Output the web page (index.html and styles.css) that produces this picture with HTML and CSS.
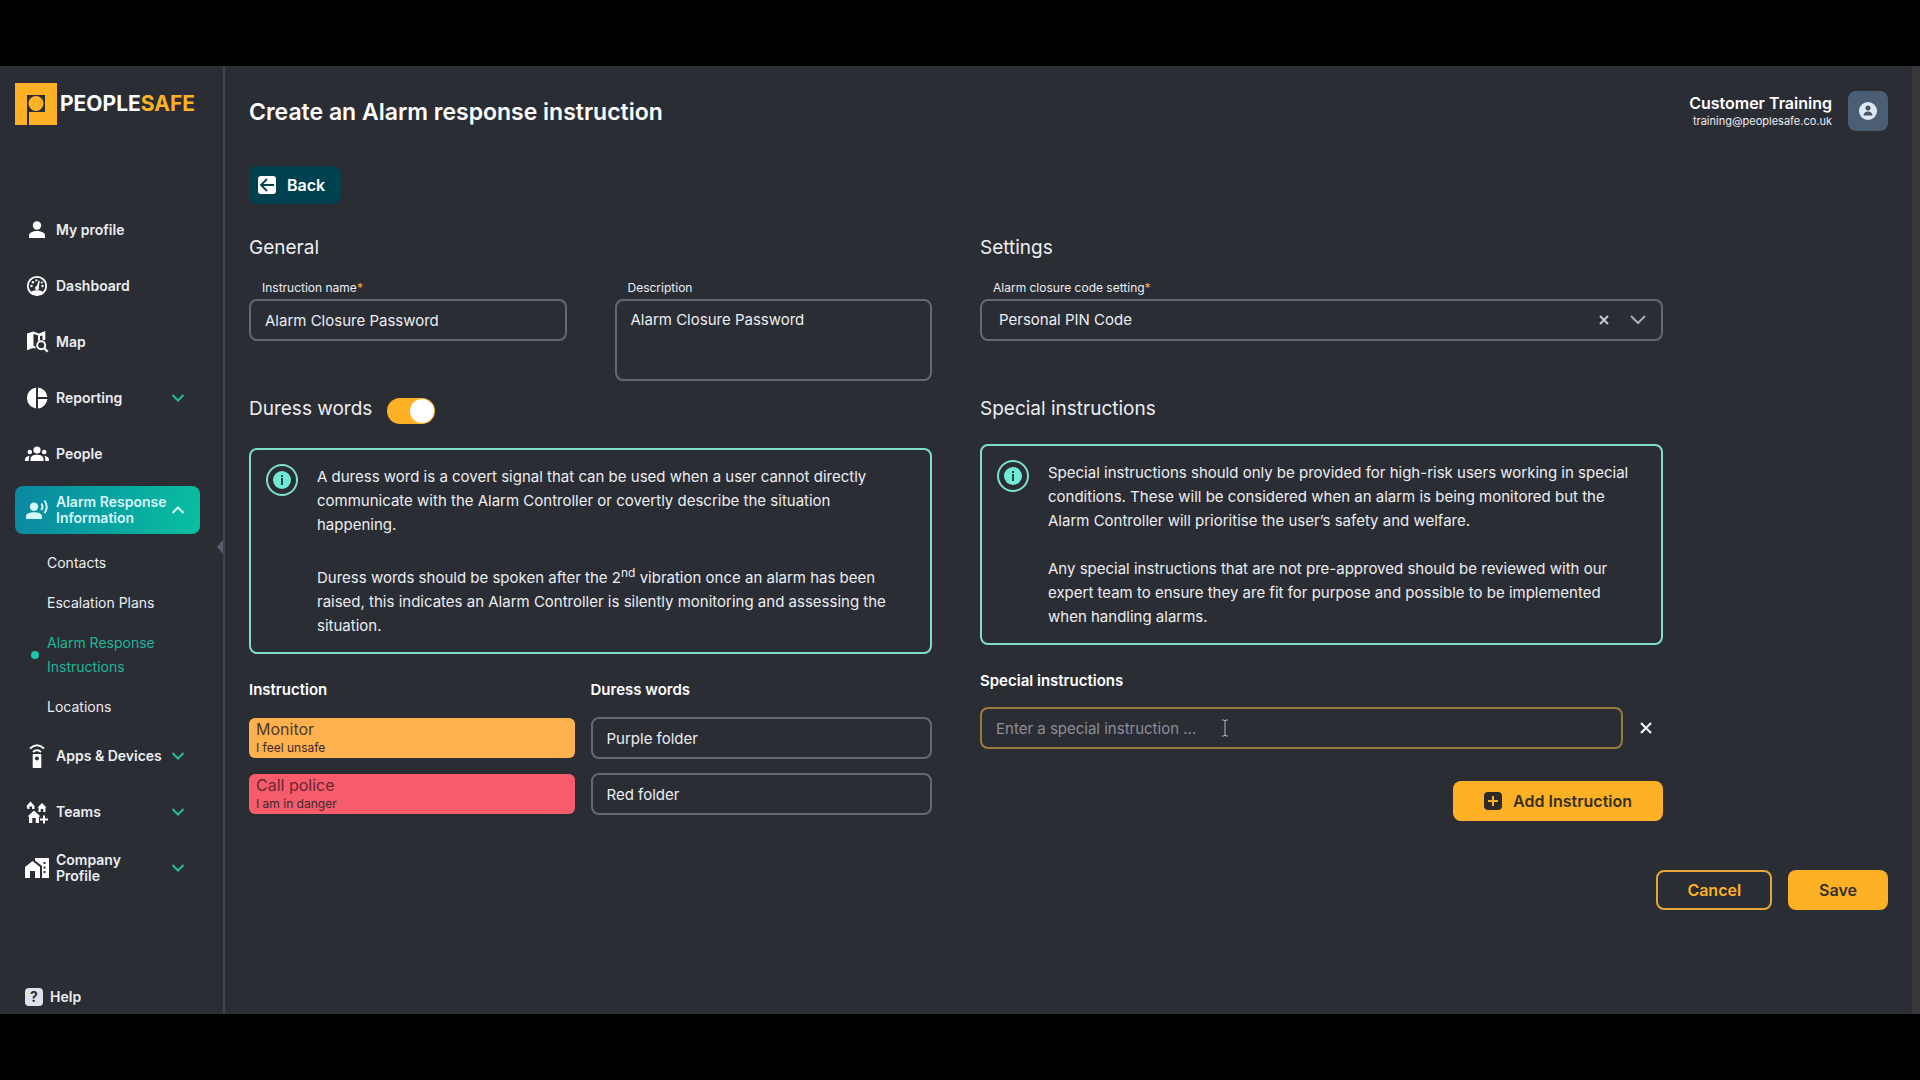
FILE: index.html
```html
<!DOCTYPE html>
<html lang="en">
<head>
<meta charset="utf-8">
<title>Create an Alarm response instruction</title>
<link rel="stylesheet" href="styles.css">
</head>
<body>
<div class="app">
  <aside class="sidebar">
    <a class="logo" href="#">
      <svg width="42" height="42" viewBox="0 0 42 42" aria-hidden="true">
        <path fill="#ffb125" d="M0 0h42v42H0z"/>
        <path fill="#2b2d35" d="M12 12h18v17H14v13h-2z"/>
        <circle cx="21" cy="20.500" r="7.500" fill="#ffb125"/>
      </svg>
      <span class="logo-text">PEOPLE<span class="logo-accent">SAFE</span></span>
    </a>
    <nav class="nav">
      <a class="nav-item" href="#">
        <svg class="nav-icon" viewBox="0 0 24 24"><circle cx="12" cy="7.500" r="4.200"/><path d="M4 20v-2.500c0-3 4-4.500 8-4.500s8 1.500 8 4.500V20z"/></svg>
        <span class="nav-label">My profile</span>
      </a>
      <a class="nav-item" href="#">
        <svg class="nav-icon" viewBox="0 0 24 24"><circle cx="12" cy="12" r="9.200" fill="none" stroke="currentColor" stroke-width="1.800"/><path d="M5.500 18.500c1.500-2 4-2.300 6.500-2.300s5 .3 6.500 2.300L12 21.500z"/><circle cx="12" cy="14" r="2"/><path d="M11.300 14l2.200-7.500 1.300.4-1.300 7.500z"/><circle cx="6.500" cy="12" r="1.200"/><circle cx="8" cy="8.200" r="1.200"/><circle cx="11.300" cy="6.300" r="1.100"/><circle cx="17.500" cy="12" r="1.200"/><circle cx="16.800" cy="8.500" r="1.100"/></svg>
        <span class="nav-label">Dashboard</span>
      </a>
      <a class="nav-item" href="#">
        <svg class="nav-icon" viewBox="0 0 24 24"><path d="M8.500 1.500v16.200L2 20.300V3.500z"/><path d="M8 2.500l6 2.200 5.300-2.200v7M14 4.700v6M8 16.800l2.500 1" fill="none" stroke="currentColor" stroke-width="2"/><path d="M14 4l6-2.300v8.500l-2.500-.5V5.500L14 6.500z"/><circle cx="16.200" cy="15.200" r="4" fill="none" stroke="currentColor" stroke-width="1.900"/><path d="m19 18 3.700 3.700" fill="none" stroke="currentColor" stroke-width="2.200"/></svg>
        <span class="nav-label">Map</span>
      </a>
      <a class="nav-item" href="#">
        <svg class="nav-icon" viewBox="0 0 24 24"><path d="M11 1.600v20.800A10.500 10.500 0 0 1 11 1.600zM13 1.600A10.500 10.500 0 0 1 22.400 11H13zM13 13h9.400A10.500 10.500 0 0 1 13 22.400z"/></svg>
        <span class="nav-label">Reporting</span>
        <svg class="chevron" viewBox="0 0 14 8"><path d="m1.500 1 5.500 5.500L12.500 1"/></svg>
      </a>
      <a class="nav-item" href="#">
        <svg class="nav-icon" viewBox="0 0 24 24"><circle cx="12" cy="8" r="3.600"/><path d="M5.500 19v-2c0-2.700 3-4.200 6.500-4.200s6.500 1.500 6.500 4.200v2z"/><circle cx="4.800" cy="10" r="2.300"/><circle cx="19.200" cy="10" r="2.300"/><path d="M0 19v-1.500C0 15.500 2 14 4.800 13.800A5 5 0 0 0 3.800 17v2zM24 19v-1.500c0-2-2-3.500-4.800-3.700a5 5 0 0 1 1 3.200v2z"/></svg>
        <span class="nav-label">People</span>
      </a>
      <a class="nav-item nav-item-active" href="#">
        <svg class="nav-icon" viewBox="0 0 24 24"><circle cx="9" cy="8.800" r="4.200"/><path d="M1 21v-2.700C1 15.500 5 14.300 9 14.300s8 1.200 8 4V21z"/><path d="M16.300 5.500a5.500 5.500 0 0 1 0 6.500M19.500 2.500a10 10 0 0 1 0 12.500" fill="none" stroke="currentColor" stroke-width="2"/></svg>
        <span class="nav-label">Alarm Response<br>Information</span>
        <svg class="chevron" viewBox="0 0 14 8"><path d="M1.500 7 7 1.500 12.500 7"/></svg>
      </a>
      <div class="subnav">
        <a class="subnav-item" href="#">Contacts</a>
        <a class="subnav-item" href="#">Escalation Plans</a>
        <a class="subnav-item subnav-item-active" href="#">Alarm Response Instructions</a>
        <a class="subnav-item" href="#">Locations</a>
      </div>
      <a class="nav-item" href="#">
        <svg class="nav-icon" viewBox="0 0 24 24"><path fill-rule="evenodd" d="M8.500 10h7a.8.8 0 0 1 .8.800V23.200a.8.8 0 0 1-.8.800h-7a.8.8 0 0 1-.8-.800V10.800a.8.8 0 0 1 .8-.8zM12 12.500a2 2 0 1 0 0 4 2 2 0 0 0 0-4z"/><path d="M5 4.500q7-6.500 14 0M8 8q4-3.500 8 0" fill="none" stroke="currentColor" stroke-width="2"/></svg>
        <span class="nav-label">Apps &amp; Devices</span>
        <svg class="chevron" viewBox="0 0 14 8"><path d="m1.500 1 5.500 5.500L12.500 1"/></svg>
      </a>
      <a class="nav-item" href="#">
        <svg class="nav-icon" viewBox="0 0 24 24"><path d="m1.500 6 4-4.500 4 4.500v3H7V6.500H4.500V9h-2zM12.500 7.500 17 3l4.500 4.500h-1V12h-2.300V9h-2.500v3h-2.200V7.500zM2.500 16.500 9 10.500l6.500 6H14V23h-3.300v-5H7.300v5H4v-6.500z"/><path d="M19 15.500v8M15 19.500h8" fill="none" stroke="currentColor" stroke-width="2"/></svg>
        <span class="nav-label">Teams</span>
        <svg class="chevron" viewBox="0 0 14 8"><path d="m1.500 1 5.500 5.500L12.500 1"/></svg>
      </a>
      <a class="nav-item" href="#">
        <svg class="nav-icon" viewBox="0 0 24 24"><path d="M0 22V11l7.500-6L15 11v11h-5v-7H5v7z"/><path fill-rule="evenodd" d="M10 2h14v20h-7V10l-7-5.500zM18.500 6v2h2V6zM18.500 10.500v2h2v-2zM18.500 15v2h2v-2z"/></svg>
        <span class="nav-label">Company<br>Profile</span>
        <svg class="chevron" viewBox="0 0 14 8"><path d="m1.500 1 5.500 5.500L12.500 1"/></svg>
      </a>
    </nav>
    <a class="help" href="#"><span class="help-mark">?</span>Help</a>
    <button class="collapse" type="button" aria-label="Collapse menu">
      <svg width="6" height="14" viewBox="0 0 6 14"><path fill="#565e6e" d="M6 0v14L0 7z"/></svg>
    </button>
  </aside>

  <main class="main">
    <header class="header">
      <h1 class="title">Create an Alarm response instruction</h1>
      <div class="user">
        <div class="user-text">
          <span class="user-name">Customer Training</span>
          <span class="user-mail">training@peoplesafe.co.uk</span>
        </div>
        <button class="avatar" type="button" aria-label="Account">
          <svg width="20" height="20" viewBox="0 0 20 20"><circle cx="10" cy="10" r="9" fill="#dfe9f3"/><circle cx="10" cy="7" r="2.500" fill="#43566a"/><path fill="#43566a" d="M5.500 14.500c0-5.500 9-5.500 9 0z"/></svg>
        </button>
      </div>
    </header>

    <button class="back" type="button">
      <svg width="20" height="20" viewBox="0 0 20 20"><rect x="1" y="1" width="18" height="18" rx="3" fill="#fff"/><path d="M17 10H4.500M10 4l-6 6 6 6" fill="none" stroke="#00414f" stroke-width="1.800"/></svg>
      Back
    </button>

    <form class="form" id="instruction-form">
      <section>
        <h2 class="heading">General</h2>
        <div class="pair">
          <div class="field">
            <label class="label" for="name">Instruction name<span class="required">*</span></label>
            <input class="control" id="name" type="text" value="Alarm Closure Password">
          </div>
          <div class="field">
            <label class="label" for="description">Description</label>
            <textarea class="control control-area" id="description">Alarm Closure Password</textarea>
          </div>
        </div>
      </section>

      <section>
        <h2 class="heading">Settings</h2>
        <div class="field">
          <label class="label" for="code">Alarm closure code setting<span class="required">*</span></label>
          <div class="select-wrap">
            <select class="control control-select" id="code"><option>Personal PIN Code</option></select>
            <button class="select-clear" type="button" aria-label="Clear">
              <svg width="12" height="12" viewBox="0 0 12 12"><path d="m2 2 8 8M10 2l-8 8" fill="none" stroke="#c6c9cf" stroke-width="2"/></svg>
            </button>
            <svg class="select-arrow" width="18" height="12" viewBox="0 0 18 12"><path d="m2 2 7 7 7-7" fill="none" stroke="#a9adb5" stroke-width="2"/></svg>
          </div>
        </div>
      </section>

      <section>
        <div class="heading-row">
          <h2 class="heading">Duress words</h2>
          <input class="toggle" type="checkbox" role="switch" aria-label="Duress words" checked>
        </div>
        <div class="info">
          <svg class="info-icon" viewBox="0 0 32 32"><circle cx="16" cy="16" r="15" fill="none" stroke="#7fe0cf" stroke-width="2"/><circle cx="16" cy="16" r="9" fill="#6febd7"/><path fill="#23484b" d="M15 11h2v2h-2zM15 14h2v7h-2z"/></svg>
          <div class="info-text">
            <p>A duress word is a covert signal that can be used when a user cannot directly communicate with the Alarm Controller or covertly describe the situation happening.</p>
            <p>Duress words should be spoken after the 2<sup>nd</sup> vibration once an alarm has been raised, this indicates an Alarm Controller is silently monitoring and assessing the situation.</p>
          </div>
        </div>
        <table class="words">
          <thead>
            <tr><th>Instruction</th><th>Duress words</th></tr>
          </thead>
          <tbody>
            <tr>
              <td><div class="tag tag-monitor"><span class="tag-name">Monitor</span><span class="tag-note">I feel unsafe</span></div></td>
              <td><input class="control" type="text" aria-label="Monitor duress words" value="Purple folder"></td>
            </tr>
            <tr>
              <td><div class="tag tag-police"><span class="tag-name">Call police</span><span class="tag-note">I am in danger</span></div></td>
              <td><input class="control" type="text" aria-label="Call police duress words" value="Red folder"></td>
            </tr>
          </tbody>
        </table>
      </section>

      <section>
        <h2 class="heading">Special instructions</h2>
        <div class="info">
          <svg class="info-icon" viewBox="0 0 32 32"><circle cx="16" cy="16" r="15" fill="none" stroke="#7fe0cf" stroke-width="2"/><circle cx="16" cy="16" r="9" fill="#6febd7"/><path fill="#23484b" d="M15 11h2v2h-2zM15 14h2v7h-2z"/></svg>
          <div class="info-text">
            <p>Special instructions should only be provided for high-risk users working in special conditions. These will be considered when an alarm is being monitored but the Alarm Controller will prioritise the user’s safety and welfare.</p>
            <p>Any special instructions that are not pre-approved should be reviewed with our expert team to ensure they are fit for purpose and possible to be implemented when handling alarms.</p>
          </div>
        </div>
        <label class="strong-label" for="special">Special instructions</label>
        <div class="special-row">
          <div class="special-field">
            <input class="control control-focus" id="special" type="text" placeholder="Enter a special instruction ...">
            <svg class="caret" width="8" height="18" viewBox="0 0 8 18"><path d="M1 1h2l1 1 1-1h2M1 17h2l1-1 1 1h2M4 2v14" fill="none" stroke="#b4b7bc" stroke-width="1"/></svg>
          </div>
          <button class="remove" type="button" aria-label="Remove instruction">
            <svg width="14" height="14" viewBox="0 0 14 14"><path d="m2 2 10 10M12 2 2 12" fill="none" stroke="#fff" stroke-width="2"/></svg>
          </button>
        </div>
        <button class="button button-add" type="button">
          <svg width="18" height="18" viewBox="0 0 18 18"><rect width="18" height="18" rx="4" fill="#2d2a28"/><path d="M9 4v10M4 9h10" stroke="#ffb125" stroke-width="2"/></svg>
          Add Instruction
        </button>
      </section>
    </form>

    <div class="actions">
      <button class="button button-outline" type="button">Cancel</button>
      <button class="button" type="submit" form="instruction-form">Save</button>
    </div>
  </main>
</div>
</body>
</html>
```
FILE: styles.css
```css
* {
  box-sizing: border-box;
}

body {
  margin: 0;
  min-height: 100vh;
  padding: 66px 0;
  display: flex;
  background: #000;
  color: #eceef1;
  font: 15px/24px Inter, "Liberation Sans", sans-serif;
}

a {
  color: inherit;
  text-decoration: none;
}

button,
input,
select,
textarea {
  font: inherit;
  color: inherit;
}

button {
  border: 0;
  padding: 0;
  background: none;
  cursor: pointer;
}

h1,
h2,
p {
  margin: 0;
}

.app {
  flex: 1;
  display: flex;
  background: #2b2d35;
  border-right: 8px solid #38383b;
}

/* Sidebar */

.sidebar {
  position: relative;
  flex: none;
  width: 225px;
  padding: 17px 23px 5px 15px;
  display: flex;
  flex-direction: column;
  border-right: 2px solid #41434b;
}

.logo {
  display: flex;
  align-items: center;
  gap: 3px;
}

.logo-text {
  color: #fff;
  font-size: 21px;
  font-weight: 700;
}

.logo-accent {
  color: #ffb125;
}

.nav {
  margin-top: 81px;
  display: flex;
  flex-direction: column;
  gap: 8px;
}

.nav-item {
  height: 48px;
  padding: 0 15px 0 10px;
  display: flex;
  align-items: center;
  gap: 7px;
  border-radius: 8px;
  font-size: 14px;
  font-weight: 600;
  line-height: 16px;
  white-space: nowrap;
}

.nav-item-active {
  background: linear-gradient(100deg, #0a87a0, #08bfa0);
}

.nav-icon {
  flex: none;
  width: 24px;
  height: 24px;
  fill: currentColor;
  color: #fff;
}

.nav-label {
  flex: 1;
  min-width: 0;
}

.chevron {
  flex: none;
  width: 14px;
  height: 8px;
  fill: none;
  stroke: #25b899;
  stroke-width: 2;
}

.nav-item-active .chevron {
  stroke: #d4fff5;
}

.nav-item-active .nav-icon,
.nav-item-active .nav-label {
  color: #d8f7fb;
}

.subnav {
  margin-top: -8px;
  padding: 17px 32px 5px;
  display: flex;
  flex-direction: column;
  gap: 16px;
  font-size: 14px;
}

.subnav-item {
  position: relative;
}

.subnav-item-active {
  color: #1fb598;
}

.subnav-item-active::before {
  content: "";
  position: absolute;
  top: 50%;
  left: -16px;
  width: 8px;
  height: 8px;
  margin-top: -4px;
  border-radius: 50%;
  background: #1fc5ab;
}

.help {
  margin-top: auto;
  padding-left: 10px;
  display: flex;
  align-items: center;
  gap: 7px;
  font-size: 14px;
  font-weight: 600;
}

.help-mark {
  width: 18px;
  height: 18px;
  border-radius: 4px;
  background: #dfe2ea;
  color: #2b2d35;
  font-weight: 700;
  line-height: 18px;
  text-align: center;
}

.collapse {
  position: absolute;
  top: 50%;
  right: 0;
  display: flex;
}

/* Main area */

.main {
  flex: 1;
  min-width: 0;
  padding: 25px 24px 24px;
}

.header {
  display: flex;
  align-items: center;
  justify-content: space-between;
}

.title {
  padding-top: 2px;
  color: #fff;
  font-size: 23px;
  font-weight: 600;
  line-height: 32px;
}

.user {
  display: flex;
  align-items: center;
  gap: 16px;
}

.user-text {
  display: flex;
  flex-direction: column;
  text-align: right;
}

.user-name {
  color: #fff;
  font-size: 16px;
  font-weight: 600;
  line-height: 20px;
}

.user-mail {
  font-size: 11px;
  line-height: 16px;
}

.avatar {
  width: 40px;
  height: 40px;
  display: grid;
  place-items: center;
  border-radius: 8px;
  background: #4b5f74;
}

.back {
  height: 38px;
  margin-top: 35px;
  padding: 0 16px 0 8px;
  display: flex;
  align-items: center;
  gap: 10px;
  border-radius: 8px;
  background: #00414f;
  color: #fff;
  font-size: 16px;
  font-weight: 600;
}

.form {
  margin-top: 30px;
  padding-right: 225px;
  display: grid;
  grid-template-columns: repeat(2, minmax(0, 1fr));
  gap: 14px 48px;
}

.heading {
  font-size: 19px;
  font-weight: 400;
  line-height: 28px;
}

.heading-row {
  height: 32px;
  display: flex;
  align-items: center;
  gap: 15px;
}

.heading-row .heading {
  align-self: flex-start;
}

.pair {
  display: grid;
  grid-template-columns: repeat(2, minmax(0, 1fr));
  gap: 48px;
}

.field {
  margin-top: 18px;
  display: flex;
  flex-direction: column;
  gap: 3px;
}

.label {
  padding-left: 13px;
  font-size: 12px;
  line-height: 16px;
}

.required {
  color: #ffb125;
}

.control {
  display: block;
  width: 100%;
  height: 42px;
  padding: 0 14px;
  border: 2px solid #646870;
  border-radius: 8px;
  background: transparent;
  outline: none;
}

.control-area {
  height: 82px;
  padding: 7px 14px;
  resize: none;
}

.control-select {
  padding: 0 80px 0 17px;
  appearance: none;
}

.control-focus {
  border-color: #9a7a3c;
}

.control::placeholder {
  color: #8b8e95;
  opacity: 1;
}

.select-wrap,
.special-field {
  position: relative;
}

.select-clear,
.select-arrow {
  position: absolute;
  top: 15px;
}

.select-clear {
  right: 53px;
  display: flex;
}

.select-arrow {
  right: 16px;
  pointer-events: none;
}

.toggle {
  width: 48px;
  height: 26px;
  margin: 0;
  padding: 1px;
  display: flex;
  justify-content: flex-end;
  appearance: none;
  border-radius: 13px;
  background: #ffb125;
}

.toggle::before {
  content: "";
  width: 24px;
  height: 24px;
  border-radius: 50%;
  background: #fff;
}

.info {
  margin-top: 21px;
  padding: 14px 20px 14px 15px;
  display: flex;
  gap: 19px;
  border: 2px solid #7fdccb;
  border-radius: 8px;
}

.info-icon {
  flex: none;
  width: 32px;
  height: 32px;
}

.info-text {
  padding-top: 1px;
  display: grid;
  gap: 24px;
}

.info-text sup {
  font-size: 12px;
}

.words {
  width: 100%;
  margin-top: 24px;
  border-collapse: collapse;
  table-layout: fixed;
}

.words th {
  padding: 0 0 8px;
  color: #fff;
  font-weight: 600;
  text-align: left;
}

.words td {
  height: 56px;
  padding: 0;
}

.words td:first-child {
  padding-right: 16px;
}

.tag {
  height: 40px;
  padding: 0 7px;
  display: flex;
  flex-direction: column;
  border-radius: 6px;
  color: #4f3c2a;
}

.tag-monitor {
  background: #ffb04f;
}

.tag-police {
  background: #f65c6c;
  color: #6b2634;
}

.tag-name {
  font-size: 16px;
  line-height: 22px;
}

.tag-note {
  color: #3c2a2c;
  font-size: 12px;
  line-height: 16px;
}

.strong-label {
  display: block;
  margin: 24px 0 14px;
  color: #fff;
  font-weight: 600;
}

.special-row {
  display: flex;
  align-items: center;
  gap: 11px;
}

.special-field {
  flex: 1;
  position: relative;
}

.caret {
  position: absolute;
  top: 12px;
  left: 241px;
}

.remove {
  width: 24px;
  height: 24px;
  margin-right: 5px;
  display: grid;
  place-items: center;
}

.button {
  height: 40px;
  padding: 0 31px;
  display: flex;
  align-items: center;
  gap: 11px;
  border-radius: 8px;
  background: #ffb125;
  color: #35301f;
  font-size: 16px;
  font-weight: 600;
}

.button-add {
  margin: 32px 0 0 auto;
}

.button-outline {
  padding: 0 29px;
  border: 2px solid #e5a737;
  background: transparent;
  color: #ffb125;
}

.actions {
  margin-top: 48px;
  display: flex;
  justify-content: flex-end;
  gap: 16px;
}
```
